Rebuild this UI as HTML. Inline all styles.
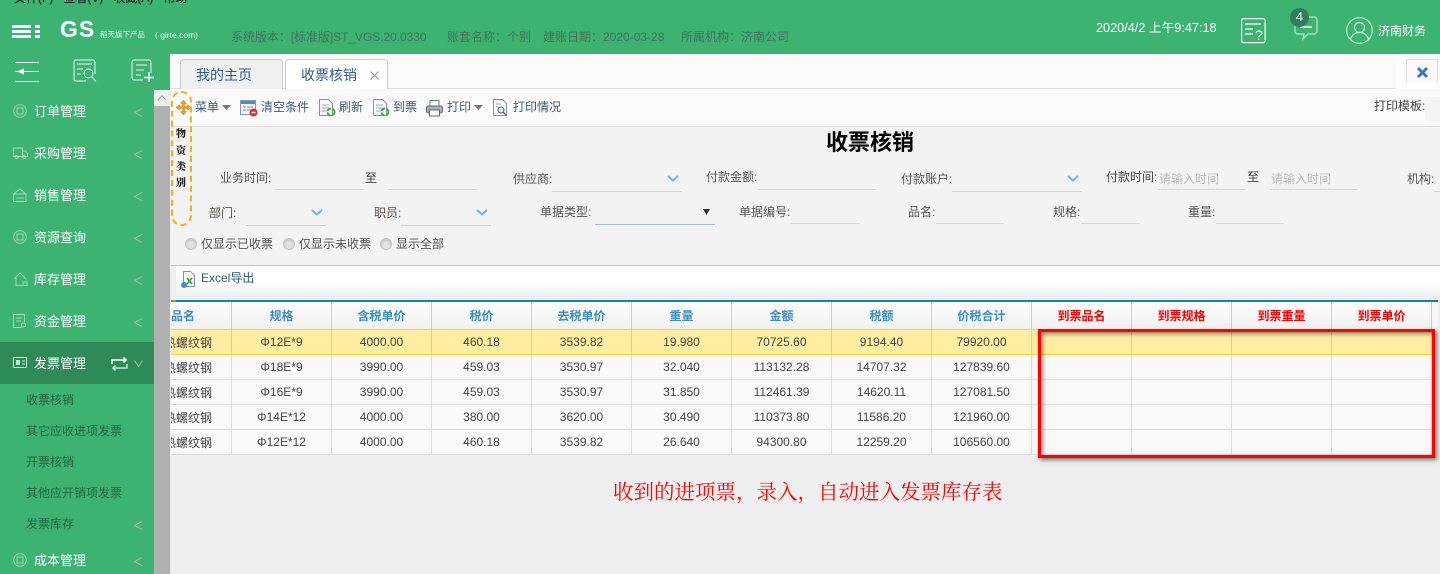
<!DOCTYPE html>
<html lang="zh-CN"><head><meta charset="utf-8"><title>收票核销</title>
<style>
*{box-sizing:border-box}
html,body{margin:0;padding:0;width:1440px;height:574px;overflow:hidden;background:#eee}
body{position:relative;font-family:"Liberation Sans","Noto Sans CJK SC",sans-serif;font-size:12px;color:#555}
.a{position:absolute}
.t{position:absolute;white-space:nowrap;line-height:16px}
svg{position:absolute;overflow:visible}
.m{left:34px;color:#fff;font-size:13px}
.s{left:26px;color:#24643f;font-size:12px}
.c{left:134px;fill:none;stroke:#9dbfa9;stroke-width:1.100}
.tb{color:#3a5d78;font-size:12px}
.u{position:absolute;height:1px;background:#c5daee}
.g{position:absolute;height:1px;background:#d0d0d0}
.r{position:absolute;width:12px;height:12px;border-radius:50%;background:#e2e2e2;border:1px solid #c4c4c4;top:238px;box-shadow:inset 0 1px 2px #bbb}
.v{left:176px;color:#222;font-size:10px;font-weight:900;font-family:"Noto Serif CJK SC",serif}
table{position:absolute;left:171px;top:302px;border-collapse:separate;border-spacing:0;table-layout:fixed;width:1261px;font-size:12px;color:#444}
td,th{padding:0;border-right:1px solid #ddd;border-bottom:1px solid #ddd;text-align:center;overflow:hidden;white-space:nowrap;height:25px;background:#f9f9f9;font-weight:400}
th{height:28px;background:linear-gradient(#fcfcfc,#f1f1f1);color:#3d8fc0;font-weight:700;border-right:1px solid #ccc;border-bottom:1px solid #ccc}
th.x{color:#f00}
tr.y td{background:#ffeea2;border-color:#ffd22e}
tr.y td{border-bottom:1px solid #ffd22e}
.first{text-align:left}
.first div{margin-left:-7px;width:80px}
</style></head><body>

<!-- header -->
<div class="a" style="left:0;top:0;width:1440px;height:54px;background:#3cb371"></div>
<div class="t" style="left:14px;top:-10px;color:#111;font-size:12px">文件(F)&nbsp;&nbsp; 查看(V)&nbsp;&nbsp; 收藏(A)&nbsp;&nbsp; 帮助</div>
<svg style="left:12px;top:25px" width="28" height="13"><path d="M0 0h19v3H0zM0 5h19v3H0zM0 10h19v3H0zM23 0h5v3h-5zM23 5h5v3h-5zM23 10h5v3h-5z" fill="#fff"/></svg>
<div class="t" style="left:60px;top:16px;color:#fff;font-size:23px;line-height:26px;font-weight:700;letter-spacing:1px">GS</div>
<div class="t" style="left:100px;top:27px;color:#e6f5ec;font-size:7.500px">稻天旗下产品</div>
<div class="t" style="left:155px;top:27px;color:#e6f5ec;font-size:8.500px">( girte.com)</div>
<div class="t" style="left:231px;top:29px;color:#45705a;font-size:12px;letter-spacing:-.05px">系统版本：[标准版]ST_VGS.20.0330</div>
<div class="t" style="left:447px;top:29px;color:#45705a;font-size:12px">账套名称：个别</div>
<div class="t" style="left:543px;top:29px;color:#45705a;font-size:12px">建账日期：2020-03-28</div>
<div class="t" style="left:681px;top:29px;color:#45705a;font-size:12px">所属机构：济南公司</div>
<div class="t" style="left:1096px;top:20px;color:#fff;font-size:12.700px">2020/4/2 上午9:47:18</div>
<svg style="left:1241px;top:18px" width="25" height="25" fill="none" stroke="#fff" stroke-width="1.200"><rect x=".6" y=".6" width="23.500" height="24" rx="2"/><path d="M4 6h16M4 11h8M4 16h8"/><text x="14" y="22" fill="#fff" stroke="none" font-size="14" font-family="Liberation Sans">?</text></svg>
<svg style="left:1293px;top:16px" width="26" height="26" fill="none" stroke="#a8dcbc" stroke-width="1.400"><path d="M5 1h16a3 3 0 0 1 3 3v11a3 3 0 0 1-3 3h-6l-5 5 1-5H5a3 3 0 0 1-3-3V4a3 3 0 0 1 3-3z"/><path d="M7 11h12" stroke="#fff"/></svg>
<div class="a" style="left:1290px;top:8px;width:19px;height:19px;border-radius:50%;background:#2f7f59"></div>
<div class="t" style="left:1290px;top:9px;width:19px;text-align:center;color:#e8f5ee;font-size:13px">4</div>
<svg style="left:1346px;top:17px" width="27" height="27" fill="none" stroke="#c8ecd6" stroke-width="1.200"><circle cx="13.500" cy="13.500" r="12.800"/><circle cx="13.500" cy="10.500" r="5"/><path d="M4.500 22.500c1-5 5-7 9-7s8 2 9 7"/></svg>
<div class="t" style="left:1378px;top:23px;color:#fff;font-size:12px">济南财务</div>

<!-- sidebar -->
<div class="a" style="left:0;top:54px;width:154px;height:520px;background:#3cb371"></div>
<div class="a" style="left:154px;top:54px;width:16px;height:36px;background:#3cb371"></div>
<div class="a" style="left:154px;top:90px;width:16px;height:16px;background:#eee"></div>
<div class="a" style="left:154px;top:106px;width:16px;height:468px;background:#b0b0b0"></div>
<div class="a" style="left:170px;top:90px;width:1px;height:484px;background:#eee"></div>
<svg style="left:157px;top:94px" width="10" height="8" fill="none" stroke="#999" stroke-width="1"><path d="M1 6l4-4 4 4"/></svg>
<svg style="left:15px;top:62px" width="24" height="20" fill="none" stroke="#fff" stroke-width="1"><path d="M0 .5h24M0 9.500h24M0 19.500h24" stroke-opacity=".9"/><path d="M2 9.500l7-3v6z" fill="#fff" stroke="none"/></svg>
<svg style="left:73px;top:59px" width="24" height="23" fill="none" stroke="#e6f7ed" stroke-width="1"><path d="M13 22H3a2 2 0 0 1-2-2V3a2 2 0 0 1 2-2h17a2 2 0 0 1 2 2v12"/><path d="M4 5h15M4 10h6M4 15h4"/><circle cx="15.500" cy="14.500" r="4.500"/><path d="M19 18l4 4.500"/></svg>
<svg style="left:131px;top:59px" width="23" height="23" fill="none" stroke="#e6f7ed" stroke-width="1"><path d="M12 21H3a2 2 0 0 1-2-2V3a2 2 0 0 1 2-2h15a2 2 0 0 1 2 2v11"/><path d="M5 6h11M5 11h8M5 16h5"/><path d="M13 18.500h10M18 13v10" stroke="#fff" stroke-width="1.400"/></svg>

<svg style="left:13px;top:104px" width="14" height="14" fill="none" stroke="#a5dcba" stroke-width=".9"><circle cx="7" cy="7" r="6.300"/><rect x="4" y="4" width="6" height="6" rx="1"/></svg>
<svg style="left:13px;top:147px" width="15" height="12" fill="none" stroke="#a5dcba" stroke-width=".9"><path d="M.5 1h9v8.500h-9zM9.500 4h3l2 2.500v3h-5z"/><circle cx="3.500" cy="10" r="1.500"/><circle cx="11" cy="10" r="1.500"/></svg>
<svg style="left:13px;top:188px" width="14" height="14" fill="none" stroke="#a5dcba" stroke-width=".9"><path d="M.5 6h12.500v7.500H.5zM.5 6L7 1l6 5"/><path d="M3 10h8"/></svg>
<svg style="left:13px;top:230px" width="14" height="14" fill="none" stroke="#a5dcba" stroke-width=".9"><circle cx="7" cy="7" r="6.300"/><rect x="4" y="4" width="6" height="6"/></svg>
<svg style="left:13px;top:272px" width="15" height="14" fill="none" stroke="#a5dcba" stroke-width=".9"><path d="M1 7l6-6 6 6M3 6v7.500h6M10 10h4v3.500h-4z"/></svg>
<svg style="left:13px;top:314px" width="13" height="14" fill="none" stroke="#a5dcba" stroke-width=".9"><path d="M11.500 8V.5H.5v13h8M3 4h6M3 7h5"/><circle cx="10.500" cy="11" r="2"/></svg>

<div class="t m" style="top:104px">订单管理</div><svg class="c" style="top:108px" width="8" height="9"><path d="M8 .5L.5 4.500 8 8.500"/></svg>
<div class="t m" style="top:146px">采购管理</div><svg class="c" style="top:150px" width="8" height="9"><path d="M8 .5L.5 4.500 8 8.500"/></svg>
<div class="t m" style="top:188px">销售管理</div><svg class="c" style="top:192px" width="8" height="9"><path d="M8 .5L.5 4.500 8 8.500"/></svg>
<div class="t m" style="top:230px">资源查询</div><svg class="c" style="top:234px" width="8" height="9"><path d="M8 .5L.5 4.500 8 8.500"/></svg>
<div class="t m" style="top:272px">库存管理</div><svg class="c" style="top:276px" width="8" height="9"><path d="M8 .5L.5 4.500 8 8.500"/></svg>
<div class="t m" style="top:314px">资金管理</div><svg class="c" style="top:318px" width="8" height="9"><path d="M8 .5L.5 4.500 8 8.500"/></svg>

<div class="a" style="left:0;top:342px;width:154px;height:42px;background:#2e8b57"></div>
<svg style="left:13px;top:357px" width="14" height="11" fill="none" stroke="#c4e8d1"><rect x=".5" y=".5" width="13" height="10"/><rect x="3" y="3" width="4" height="5" fill="#c4e8d1" stroke="none"/><path d="M9 4h3M9 7h3"/></svg>
<div class="t m" style="top:356px">发票管理</div>
<svg style="left:111px;top:357px" width="17" height="14" fill="none" stroke="#fff" stroke-width="1.600"><path d="M1 7V3h14M12.500 .5l2.500 2.500-2.500 2.500"/><path d="M16 7v4H2M4.500 8.500L2 11l2.500 2.500" stroke="#c3e3cf"/></svg>
<svg style="left:134px;top:360px" width="9" height="7" fill="none" stroke="#9dbfa9" stroke-width="1.100"><path d="M.5.500l4 6 4-6"/></svg>

<div class="t s" style="top:392px">收票核销</div>
<div class="t s" style="top:423px">其它应收进项发票</div>
<div class="t s" style="top:454px">开票核销</div>
<div class="t s" style="top:485px">其他应开销项发票</div>
<div class="t s" style="top:516px">发票库存</div><svg class="c" style="top:521px" width="8" height="9"><path d="M8 .5L.5 4.500 8 8.500"/></svg>
<svg style="left:13px;top:553px" width="14" height="14" fill="none" stroke="#a5dcba" stroke-width=".9"><circle cx="7" cy="7" r="6.300"/><rect x="4" y="4" width="6" height="6"/></svg>
<div class="t m" style="top:553px">成本管理</div><svg class="c" style="top:557px" width="8" height="9"><path d="M8 .5L.5 4.500 8 8.500"/></svg>

<!-- tabs -->
<div class="a" style="left:170px;top:54px;width:1270px;height:35px;background:#fafafa;border-bottom:1px solid #ddd"></div>
<div class="a" style="left:1396px;top:54px;width:44px;height:35px;background:#fff"></div>
<div class="a" style="left:180px;top:59px;width:103px;height:30px;background:#f0f0f0;border:1px solid #ccc;border-bottom:0;border-radius:4px 4px 0 0"></div>
<div class="t" style="left:196px;top:67px;color:#2f5a8c;font-size:14px">我的主页</div>
<div class="a" style="left:285px;top:59px;width:103px;height:31px;background:#fff;border:1px solid #ccc;border-bottom:0;border-radius:4px 4px 0 0"></div>
<div class="t" style="left:301px;top:67px;color:#2f5a8c;font-size:14px">收票核销</div>
<svg style="left:370px;top:71px" width="9" height="9" stroke="#999" stroke-width="1.100"><path d="M.5.500l8 8M8.500.500l-8 8"/></svg>
<div class="a" style="left:1406px;top:59px;width:32px;height:24px;background:#fafafa;border:1px solid #ddd;border-bottom:0"></div>
<svg style="left:1417px;top:67px" width="11" height="11" stroke="#3b78b5" stroke-width="3"><path d="M1 1l9 9M10 1l-9 9"/></svg>

<!-- toolbar -->
<div class="a" style="left:171px;top:89px;width:1269px;height:38px;background:#fafafa;border-bottom:1px solid #ddd"></div>
<svg style="left:176px;top:100px" width="15" height="15" fill="#f0a020" stroke="#c8820c" stroke-width=".5"><path d="M7.500 0l3 3.500H8.500v3h3v-2L15 7.500l-3.500 3v-2h-3v3h2L7.500 15l-3-3.500h2v-3h-3v2L0 7.500l3.500-3v2h3v-3h-2z"/></svg>
<div class="t tb" style="left:195px;top:99px">菜单</div>
<svg style="left:222px;top:105px" width="9" height="5" fill="#777"><path d="M0 0h9L4.500 5z"/></svg>
<svg style="left:240px;top:100px" width="18" height="17"><rect x=".5" y=".5" width="15" height="14" fill="#f4f8fc" stroke="#7d9bb8"/><rect x="1" y="1" width="14" height="3" fill="#4d8ec8"/><path d="M3 7h3M7 7h6M3 10h3M7 10h4" stroke="#889"/><circle cx="13.500" cy="12.500" r="4" fill="#e02c2c"/><path d="M11.500 12.500h4" stroke="#fff" stroke-width="1.500"/></svg>
<div class="t tb" style="left:261px;top:99px">清空条件</div>
<svg style="left:319px;top:99px" width="17" height="18"><path d="M.5.500h9l4 4v12H.5z" fill="#f6f7fa" stroke="#8890a8"/><path d="M3 6h7M3 9h7M3 12h5" stroke="#aab"/><circle cx="12" cy="13" r="3.500" fill="none" stroke="#3da53d" stroke-width="1.800" stroke-dasharray="4.500 1.500"/></svg>
<div class="t tb" style="left:339px;top:99px">刷新</div>
<svg style="left:373px;top:99px" width="17" height="18"><path d="M.5.500h9l4 4v12H.5z" fill="#f6f7fa" stroke="#8890a8"/><path d="M3 6h7M3 9h7M3 12h5" stroke="#aab"/><circle cx="12" cy="13" r="3.500" fill="none" stroke="#3da53d" stroke-width="1.800" stroke-dasharray="4.500 1.500"/></svg>
<div class="t tb" style="left:393px;top:99px">到票</div>
<svg style="left:426px;top:100px" width="17" height="17"><rect x="4" y=".5" width="9" height="6" fill="#fff" stroke="#778"/><rect x=".5" y="6" width="16" height="7" rx="2" fill="#a8aeb6" stroke="#667"/><rect x="3.500" y="10" width="10" height="6" fill="#fff" stroke="#667"/></svg>
<div class="t tb" style="left:447px;top:99px">打印</div>
<svg style="left:474px;top:105px" width="9" height="5" fill="#777"><path d="M0 0h9L4.500 5z"/></svg>
<svg style="left:493px;top:99px" width="16" height="18"><path d="M.5.500h9l4 4v12H.5z" fill="#f6f7fa" stroke="#8890a8"/><path d="M3 5h5M3 8h3" stroke="#aab"/><circle cx="8" cy="11" r="3" fill="#e6eef5" stroke="#567"/><path d="M10 13l3 3" stroke="#567" stroke-width="1.300"/></svg>
<div class="t tb" style="left:513px;top:99px">打印情况</div>
<div class="t" style="left:1374px;top:98px;color:#444">打印模板:</div>
<div class="a" style="left:1425px;top:97px;width:15px;height:24px;background:#f4f4f4;border-radius:3px 0 0 3px"></div>

<!-- filter panel -->
<div class="a" style="left:171px;top:127px;width:1269px;height:138px;background:#f3f3f3"></div>
<div class="a" style="left:171px;top:265px;width:1269px;height:1px;background:#b5c4d2"></div>
<div class="t" style="left:826px;top:130px;color:#000;font-size:22px;line-height:26px;font-weight:700">收票核销</div>

<div class="t" style="left:220px;top:170px">业务时间:</div><div class="u" style="left:275px;top:189px;width:89px"></div>
<div class="t" style="left:365px;top:170px;color:#444">至</div><div class="u" style="left:388px;top:189px;width:89px"></div>
<div class="t" style="left:513px;top:171px">供应商:</div><div class="g" style="left:552px;top:191px;width:130px"></div>
<svg style="left:667px;top:175px" width="12" height="7" fill="none" stroke="#6db5e8" stroke-width="2"><path d="M1 1l5 4.500L11 1"/></svg>
<div class="t" style="left:706px;top:169px">付款金额:</div><div class="u" style="left:758px;top:189px;width:118px"></div>
<div class="t" style="left:901px;top:171px">付款账户:</div><div class="g" style="left:952px;top:191px;width:130px"></div>
<svg style="left:1067px;top:175px" width="12" height="7" fill="none" stroke="#6db5e8" stroke-width="2"><path d="M1 1l5 4.500L11 1"/></svg>
<div class="t" style="left:1106px;top:169px;color:#444">付款时间:</div><div class="u" style="left:1158px;top:189px;width:88px"></div>
<div class="t" style="left:1159px;top:171px;color:#bbb">请输入时间</div>
<div class="t" style="left:1247px;top:169px;color:#444">至</div><div class="u" style="left:1270px;top:189px;width:88px"></div>
<div class="t" style="left:1271px;top:171px;color:#bbb">请输入时间</div>
<div class="t" style="left:1407px;top:171px">机构:</div><div class="g" style="left:1434px;top:191px;width:6px"></div>

<div class="t" style="left:209px;top:205px;color:#5a5048">部门:</div><div class="g" style="left:246px;top:225px;width:80px"></div>
<svg style="left:311px;top:209px" width="12" height="7" fill="none" stroke="#6db5e8" stroke-width="2"><path d="M1 1l5 4.500L11 1"/></svg>
<div class="t" style="left:374px;top:205px;color:#5a5048">职员:</div><div class="g" style="left:401px;top:225px;width:90px"></div>
<svg style="left:476px;top:209px" width="12" height="7" fill="none" stroke="#6db5e8" stroke-width="2"><path d="M1 1l5 4.500L11 1"/></svg>
<div class="t" style="left:540px;top:204px">单据类型:</div><div class="a" style="left:595px;top:224px;width:120px;height:1px;background:#a9bcd4"></div>
<svg style="left:703px;top:209px" width="7" height="6" fill="#333"><path d="M0 0h7L3.500 6z"/></svg>
<div class="t" style="left:739px;top:204px">单据编号:</div><div class="u" style="left:791px;top:223px;width:69px"></div>
<div class="t" style="left:908px;top:204px">品名:</div><div class="u" style="left:936px;top:223px;width:68px"></div>
<div class="t" style="left:1053px;top:204px">规格:</div><div class="u" style="left:1081px;top:223px;width:59px"></div>
<div class="t" style="left:1188px;top:204px">重量:</div><div class="u" style="left:1216px;top:223px;width:68px"></div>

<div class="r" style="left:185px"></div><div class="t" style="left:201px;top:236px">仅显示已收票</div>
<div class="r" style="left:283px"></div><div class="t" style="left:299px;top:236px">仅显示未收票</div>
<div class="r" style="left:380px"></div><div class="t" style="left:396px;top:236px">显示全部</div>

<!-- dashed box -->
<div class="a" style="left:171px;top:91px;width:21px;height:135px;border:2px dashed #ffa91a;border-radius:11px"></div>
<div class="t v" style="top:125px">物</div>
<div class="t v" style="top:142px">资</div>
<div class="t v" style="top:158px">类</div>
<div class="t v" style="top:174px">别</div>

<!-- excel bar -->
<div class="a" style="left:176px;top:266px;width:1264px;height:34px;background:linear-gradient(#fff 45%,#ececec)"></div>
<svg style="left:180px;top:271px" width="16" height="18"><path d="M3.500.500h7l4 4v11h-11z" fill="#f6f7fa" stroke="#8890a8"/><path d="M7 7l5 6M12 7l-5 6" stroke="#3a9a3a" stroke-width="1.500"/><circle cx="4" cy="14" r="3" fill="#3d8fd0"/></svg>
<div class="t" style="left:201px;top:270px;color:#2a5a80;font-size:12px">Excel导出</div>
<div class="a" style="left:171px;top:300px;width:5px;height:2px;background:#8aa020"></div>
<div class="a" style="left:176px;top:300px;width:1262px;height:2px;background:#0b85b2"></div>
<div class="a" style="left:1432px;top:302px;width:6px;height:27px;background:#f6f6f6"></div>

<!-- table -->
<table><colgroup><col style="width:61px"><col span="12" style="width:100px"></colgroup>
<tr><th class="first">品名</th><th>规格</th><th>含税单价</th><th>税价</th><th>去税单价</th><th>重量</th><th>金额</th><th>税额</th><th>价税合计</th><th class="x">到票品名</th><th class="x">到票规格</th><th class="x">到票重量</th><th class="x">到票单价</th></tr>
<tr class="y"><td class="first"><div>热螺纹钢</div></td><td>Φ12E*9</td><td>4000.00</td><td>460.18</td><td>3539.82</td><td>19.980</td><td>70725.60</td><td>9194.40</td><td>79920.00</td><td></td><td></td><td></td><td></td></tr>
<tr><td class="first"><div>热螺纹钢</div></td><td>Φ18E*9</td><td>3990.00</td><td>459.03</td><td>3530.97</td><td>32.040</td><td>113132.28</td><td>14707.32</td><td>127839.60</td><td></td><td></td><td></td><td></td></tr>
<tr><td class="first"><div>热螺纹钢</div></td><td>Φ16E*9</td><td>3990.00</td><td>459.03</td><td>3530.97</td><td>31.850</td><td>112461.39</td><td>14620.11</td><td>127081.50</td><td></td><td></td><td></td><td></td></tr>
<tr><td class="first"><div>热螺纹钢</div></td><td>Φ14E*12</td><td>4000.00</td><td>380.00</td><td>3620.00</td><td>30.490</td><td>110373.80</td><td>11586.20</td><td>121960.00</td><td></td><td></td><td></td><td></td></tr>
<tr><td class="first"><div>热螺纹钢</div></td><td>Φ12E*12</td><td>4000.00</td><td>460.18</td><td>3539.82</td><td>26.640</td><td>94300.80</td><td>12259.20</td><td>106560.00</td><td></td><td></td><td></td><td></td></tr>
</table>

<!-- red highlight -->
<div class="a" style="left:1038px;top:329px;width:397px;height:129px;border:3px solid #f00;box-shadow:2px 2px 4px rgba(0,0,0,.5),inset 2px 2px 4px rgba(0,0,0,.45)"></div>

<div class="t" style="left:613px;top:481px;color:#f00;font-size:20.500px;line-height:24px;font-family:'Liberation Serif','Noto Serif CJK SC',serif">收到的进项票，录入，自动进入发票库存表</div>
</body></html>
